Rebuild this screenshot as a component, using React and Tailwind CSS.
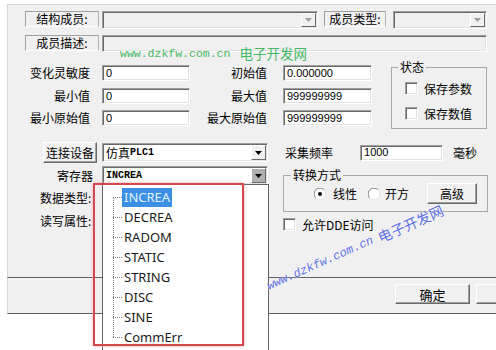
import React from "react";

const sunken =
  "border border-t-[#a0a0a0] border-l-[#a0a0a0] border-r-white border-b-white shadow-[inset_1px_1px_0_#696969,inset_-1px_-1px_0_#e3e3e3]";
const raised =
  "border border-t-white border-l-white border-r-[#696969] border-b-[#696969] shadow-[inset_-1px_-1px_0_#a0a0a0] bg-[#f0f0f0]";
const num = "font-['Liberation_Sans',sans-serif] text-[11px]";

function LabelBox({ className = "", children }) {
  return (
    <div className={`h-[16px] flex items-center justify-center border border-t-[#a0a0a0] border-l-[#a0a0a0] border-r-[#b4b4b4] border-b-white ${className}`}>
      {children}
    </div>
  );
}

function Edit({ className = "", children }) {
  return (
    <div className={`${sunken} h-[16px] flex items-center pl-[3px] ${num} ${className}`}>{children}</div>
  );
}

function Arrow({ color = "#000" }) {
  return (
    <svg width="7" height="4" viewBox="0 0 7 4">
      <path d="M0 0h7L3.5 4z" fill={color} />
    </svg>
  );
}

function Combo({ className = "", btn = "bg-[#f0f0f0]", arrow = "#000", children }) {
  return (
    <div className={`${sunken} flex items-stretch p-[1px] ${className}`}>
      <div className="flex-1 flex items-center pl-[2px] overflow-hidden whitespace-nowrap">{children}</div>
      <div className={`w-[15px] flex items-center justify-center border border-t-white border-l-white border-r-[#696969] border-b-[#696969] ${btn}`}>
        <Arrow color={arrow} />
      </div>
    </div>
  );
}

function Check({ label }) {
  return (
    <div className="flex items-center">
      <div className={`${sunken} w-[13px] h-[13px] bg-white`} />
      <span className="ml-[6px]">{label}</span>
    </div>
  );
}

function Radio({ on }) {
  return (
    <svg width="12" height="12" viewBox="0 0 12 12">
      <circle cx="6" cy="6" r="5.5" fill="#fff" />
      <path d="M1.8 10.2A5.5 5.5 0 0 1 10.2 1.8" stroke="#808080" fill="none" />
      <path d="M10.2 1.8A5.5 5.5 0 0 1 1.8 10.2" stroke="#e3e3e3" fill="none" />
      {on && <circle cx="6" cy="6" r="2" fill="#000" />}
    </svg>
  );
}

const items = ["INCREA", "DECREA", "RADOM", "STATIC", "STRING", "DISC", "SINE", "CommErr"];

export default function App() {
  return (
    <div className="relative w-[496px] h-[350px] overflow-hidden bg-white pt-[4px] pl-[7px] text-black font-['Noto_Sans_CJK_SC',sans-serif] text-[12px] leading-none">
      <div className="h-[274px] bg-[#f0f0f0] border-l border-t border-b border-l-[#d8d8d8] border-t-[#d8d8d8] border-b-[#5f5f5f]">
        {/* row 1 */}
        <div className="mt-[6px] flex items-start pl-[17px]">
          <LabelBox className="w-[74px]">结构成员:</LabelBox>
          <Combo className="ml-[3px] w-[216px] h-[18px] bg-[#f0f0f0]" arrow="#a0a0a0" />
          <LabelBox className="ml-[6px] w-[62px]">成员类型:</LabelBox>
          <Combo className="ml-[7px] w-[94px] h-[18px] bg-[#f0f0f0]" arrow="#a0a0a0" />
        </div>
        {/* row 2 */}
        <div className="mt-[6px] flex items-start pl-[17px]">
          <LabelBox className="w-[74px]">成员描述:</LabelBox>
          <div className={`${sunken} ml-[3px] w-[385px] h-[17px] bg-[#f0f0f0]`} />
        </div>

        {/* values + status */}
        <div className="mt-[8px] flex items-start">
          <div className="w-[364px]">
            {[
              ["变化灵敏度", "0", "初始值", "0.000000", "mt-[5px]"],
              ["最小值", "0", "最大值", "999999999", "mt-[7px]"],
              ["最小原始值", "0", "最大原始值", "999999999", "mt-[6px]"],
            ].map(([l1, v1, l2, v2, mt]) => (
              <div key={l1} className={`flex items-center ${mt}`}>
                <span className="w-[82px] text-right">{l1}</span>
                <Edit className="ml-[12px] w-[88px] bg-white">{v1}</Edit>
                <span className="w-[77px] text-right">{l2}</span>
                <Edit className="ml-[16px] w-[89px] bg-white">{v2}</Edit>
              </div>
            ))}
          </div>
          <fieldset className="ml-[19px] w-[96px] h-[69px] border border-[#a8a8a8]">
            <legend className="ml-[6px] px-[2px] leading-[14px]">状态</legend>
            <div className="pl-[13px]">
              <div className="mt-[8px]">
                <Check label="保存参数" />
              </div>
              <div className="mt-[12px]">
                <Check label="保存数值" />
              </div>
            </div>
          </fieldset>
        </div>

        {/* device row */}
        <div className="mt-[13px] flex items-center h-[21px]">
          <div className={`${raised} ml-[35px] w-[54px] h-[21px] flex items-center justify-center`}>连接设备</div>
          <Combo className="ml-[5px] w-[166px] h-[19px] bg-white">
            <span>仿真</span>
            <span className="font-['Liberation_Mono',monospace] text-[10px] font-bold">PLC1</span>
          </Combo>
          <span className="ml-[17px]">采集频率</span>
          <Edit className="ml-[27px] w-[83px] bg-white">1000</Edit>
          <span className="ml-[10px]">毫秒</span>
        </div>

        {/* register / convert */}
        <div className="mt-[3px] flex items-start">
          <div className="w-[260px]">
            <div className="flex items-center h-[19px]">
              <span className="w-[85px] text-right">寄存器</span>
              <Combo className="ml-[9px] w-[166px] h-[19px] bg-white" btn="bg-[#b0b0b0]">
                <span className="font-['Liberation_Mono',monospace] text-[10px] font-bold">INCREA</span>
              </Combo>
            </div>
            <div className="mt-[6px] pl-[32px] h-[14px] flex items-center">数据类型:</div>
            <div className="mt-[9px] pl-[32px] h-[14px] flex items-center">读写属性:</div>
          </div>
          <div className="ml-[15px]">
            <fieldset className="mt-[2px] w-[205px] h-[44px] border border-[#a8a8a8]">
              <legend className="ml-[7px] px-[2px] leading-[14px]">转换方式</legend>
              <div className="mt-[1px] h-[21px] flex items-center pl-[30px]">
                <Radio on />
                <span className="ml-[7px]">线性</span>
                <span className="ml-[11px] flex">
                  <Radio />
                </span>
                <span className="ml-[5px]">开方</span>
                <div className={`${raised} ml-[18px] w-[50px] h-[21px] flex items-center justify-center`}>高级</div>
              </div>
            </fieldset>
            <div className="mt-[6px]">
              <Check label="允许DDE访问" />
            </div>
          </div>
        </div>
      </div>

      {/* button strip */}
      <div className="h-[36px] bg-[#f0f0f0] border-l border-b border-l-[#d8d8d8] border-b-[#5f5f5f] flex items-start pt-[6px] pl-[387px] gap-[6px]">
        <div className={`${raised} shrink-0 w-[75px] h-[20px] flex items-center justify-center text-[13px]`}>确定</div>
        <div className={`${raised} shrink-0 w-[75px] h-[20px]`} />
      </div>

      {/* green watermark */}
      <div className="absolute left-[120px] top-[47px] flex items-center whitespace-nowrap text-[#44b865]">
        <span className="font-['Liberation_Mono',monospace] text-[11.5px]">www.dzkfw.com.cn</span>
        <span className="ml-[9px] text-[13.5px]">电子开发网</span>
      </div>

      {/* dropdown list */}
      <div className="absolute left-[102px] top-[184px] w-[167px] h-[170px] bg-white border border-[#646464] pt-[2px] font-['Noto_Sans',sans-serif] text-[13px] text-[#1a1a1a]">
        <div className="absolute left-[10px] top-[12px] h-[140px] border-l border-dotted border-[#808080]" />
        {items.map((t, i) => (
          <div key={t} className="h-[20px] flex items-center">
            <span className="ml-[10px] w-[9px] border-t border-dotted border-[#808080]" />
            <span className={`px-[2px] h-[19px] flex items-center ${i === 0 ? "bg-[#3b8fe5] text-[#e2f4ff]" : ""}`}>{t}</span>
          </div>
        ))}
      </div>

      {/* red marker */}
      <div className="absolute left-[93px] top-[183px] w-[151px] h-[163px] border-2 border-[#d4474d] shadow-[0_0_3px_#f2a8a8]" />

      {/* blue watermark */}
      <div className="absolute left-[255px] top-[239px] w-[200px] h-[18px] flex items-center justify-center rotate-[-24deg] whitespace-nowrap text-[#5a6fe3] [text-shadow:0_0_2px_#fff]">
        <span className="font-['Liberation_Mono',monospace] text-[12px] italic">www.dzkfw.com.cn</span>
        <span className="ml-[6px] text-[14px]">电子开发网</span>
      </div>
    </div>
  );
}
